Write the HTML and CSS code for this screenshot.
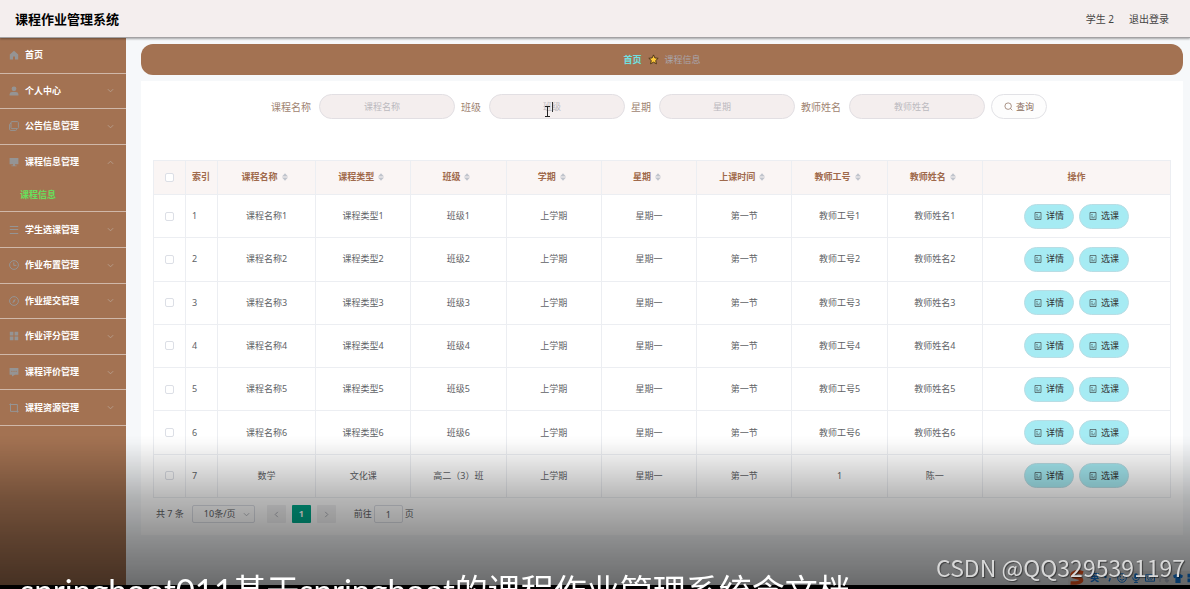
FILE: index.html
```html
<!DOCTYPE html>
<html lang="zh-CN">
<head>
<meta charset="utf-8">
<meta name="viewport" content="width=device-width, initial-scale=1">
<title>课程作业管理系统</title>
<link rel="stylesheet" href="styles.css">
</head>
<body>
<svg class="sprite" aria-hidden="true">
  <symbol id="down" viewBox="0 0 8 8"><path d="M1 2.5 4 5.5 7 2.5" fill="none" stroke="currentColor"/></symbol>
  <symbol id="up" viewBox="0 0 8 8"><path d="M1 5.5 4 2.5 7 5.5" fill="none" stroke="currentColor"/></symbol>
  <symbol id="left" viewBox="0 0 8 8"><path d="M5.5 1 2.5 4 5.5 7" fill="none" stroke="currentColor"/></symbol>
  <symbol id="right" viewBox="0 0 8 8"><path d="M2.5 1 5.5 4 2.5 7" fill="none" stroke="currentColor"/></symbol>
  <symbol id="sort" viewBox="0 0 6 8"><path d="M0 3.4 3 .2 6 3.4ZM0 4.6 3 7.8 6 4.6Z" fill="currentColor"/></symbol>
  <symbol id="doc" viewBox="0 0 8 8"><path d="M1 .5h6v7H1zM2.3 2.5h1.3M2.3 4.2h1.5M2.3 5.8h3.4M5.4 3.8v.8" fill="none" stroke="currentColor" stroke-width=".6"/></symbol>
</svg>

<header class="topbar">
  <h1 class="brand">课程作业管理系统</h1>
  <nav class="account"><span>学生 2</span><a href="#logout">退出登录</a></nav>
</header>

<div class="shell">
  <nav class="sidebar">
    <ul class="menu">
      <li class="entry"><a href="#home"><svg class="icon" viewBox="0 0 10 10"><path d="M5 .8.8 4.6V9.6H4V6.6h2v3h3.2v-5z" fill="currentColor"/></svg>首页</a></li>
      <li class="entry"><a href="#me"><svg class="icon" viewBox="0 0 10 10"><circle cx="5" cy="2.8" r="2.4" fill="currentColor"/><path d="M.6 9.6V8Q.8 6 3 6h4q2.2 0 2.4 2v1.6z" fill="currentColor"/></svg>个人中心<svg class="arrow"><use href="#down"/></svg></a></li>
      <li class="entry"><a href="#notice"><svg class="icon" viewBox="0 0 10 10"><path d="M3 .6h5.4q1 0 1 1v5q0 1-1 1H3q-1 0-1-1v-5q0-1 1-1zM2 2.4Q.6 2.4.6 3.8v4.4q0 1.2 1.2 1.2h4.8q1 0 1-1.2" fill="none" stroke="currentColor"/></svg>公告信息管理<svg class="arrow"><use href="#down"/></svg></a></li>
      <li class="entry"><a href="#course"><svg class="icon" viewBox="0 0 10 10"><path d="M.6 1h8.8v6.2H6v1.2h1.6v.8H2.4v-.8H4V7.2H.6z" fill="currentColor"/></svg>课程信息管理<svg class="arrow"><use href="#up"/></svg></a></li>
      <li class="sub"><a href="#course-info">课程信息</a></li>
      <li class="entry"><a href="#select"><svg class="icon" viewBox="0 0 10 10"><path d="M.8 1.5h8.4M.8 4.5h8.4M.8 8.5h8.4" stroke="currentColor" stroke-width="1.2"/></svg>学生选课管理<svg class="arrow"><use href="#down"/></svg></a></li>
      <li class="entry"><a href="#assign"><svg class="icon" viewBox="0 0 10 10"><circle cx="5" cy="5" r="4.4" fill="none" stroke="currentColor"/><path d="M4.8 2.4V5.4h2.6" fill="none" stroke="currentColor"/></svg>作业布置管理<svg class="arrow"><use href="#down"/></svg></a></li>
      <li class="entry"><a href="#submit"><svg class="icon" viewBox="0 0 10 10"><circle cx="5" cy="5" r="4.4" fill="none" stroke="currentColor"/><path d="M6.8 2.8 5.6 5.7 3.3 7.2 4.5 4.3z" fill="currentColor"/></svg>作业提交管理<svg class="arrow"><use href="#down"/></svg></a></li>
      <li class="entry"><a href="#score"><svg class="icon" viewBox="0 0 10 10"><path d="M.8.8h3.6v3.6H.8zM5.6.8h3.6v3.6H5.6zM.8 5.6h3.6v3.6H.8zM5.6 5.6h3.6v3.6H5.6z" fill="currentColor"/></svg>作业评分管理<svg class="arrow"><use href="#down"/></svg></a></li>
      <li class="entry"><a href="#review"><svg class="icon" viewBox="0 0 10 10"><path d="M.6 1h8.8v6.8H6L3 9.4V7.8H.6z" fill="currentColor"/><path d="M2.4 4.4h1M4.5 4.4h1M6.6 4.4h1" stroke="#a37252" stroke-width="1"/></svg>课程评价管理<svg class="arrow"><use href="#down"/></svg></a></li>
      <li class="entry"><a href="#resource"><svg class="icon" viewBox="0 0 10 10"><path d="M1.5.4v8h8.1M.4 1.5h8v8.1" fill="none" stroke="currentColor"/></svg>课程资源管理<svg class="arrow"><use href="#down"/></svg></a></li>
    </ul>
  </nav>

  <main class="content">
    <nav class="crumbs">
      <a class="crumb-home" href="#home">首页</a>
      <svg class="star" viewBox="0 0 12 12"><path d="m6 1 1.5 3.3 3.6.4-2.7 2.4.8 3.6L6 8.9l-3.2 1.8.8-3.6L.9 4.7l3.6-.4z" fill="#ffc83a" stroke="#3c2912" stroke-width=".9" stroke-linejoin="round"/></svg>
      <span class="crumb-here">课程信息</span>
    </nav>

    <section class="card">
      <form class="filters">
        <div class="field"><label for="f-course">课程名称</label><input id="f-course" type="text" placeholder="课程名称"></div>
        <div class="field"><label for="f-class">班级</label><span class="focus-box"><input id="f-class" type="text" placeholder="班级"><svg class="cursor" viewBox="0 0 12 18"><path d="M8.5 1v10" stroke="#333"/><path d="M1 5.5h5M3.5 5.5v10M1 15.5h5" fill="none" stroke="#222"/></svg></span></div>
        <div class="field"><label for="f-day">星期</label><input id="f-day" type="text" placeholder="星期"></div>
        <div class="field"><label for="f-teacher">教师姓名</label><input id="f-teacher" type="text" placeholder="教师姓名"></div>
        <button class="search" type="button"><svg class="glass" viewBox="0 0 10 10"><circle cx="4.6" cy="4.6" r="3.6" fill="none" stroke="currentColor" stroke-width=".8"/><path d="m7.2 7.2 2 2" stroke="currentColor" stroke-width=".8"/></svg>查询</button>
      </form>

      <table class="grid">
        <colgroup><col class="c-check"><col class="c-index"><col class="c-name"><col><col><col><col><col><col><col><col class="c-ops"></colgroup>
        <thead>
          <tr><th><input type="checkbox" aria-label="全选"></th><th class="index">索引</th><th>课程名称<svg class="sort"><use href="#sort"/></svg></th><th>课程类型<svg class="sort"><use href="#sort"/></svg></th><th>班级<svg class="sort"><use href="#sort"/></svg></th><th>学期<svg class="sort"><use href="#sort"/></svg></th><th>星期<svg class="sort"><use href="#sort"/></svg></th><th>上课时间<svg class="sort"><use href="#sort"/></svg></th><th>教师工号<svg class="sort"><use href="#sort"/></svg></th><th>教师姓名<svg class="sort"><use href="#sort"/></svg></th><th>操作</th></tr>
        </thead>
        <tbody>
          <tr><td><input type="checkbox" aria-label="选择 1"></td><td class="index">1</td><td>课程名称1</td><td>课程类型1</td><td>班级1</td><td>上学期</td><td>星期一</td><td>第一节</td><td>教师工号1</td><td>教师姓名1</td><td><div class="ops"><button type="button"><svg class="doc"><use href="#doc"/></svg>详情</button><button type="button"><svg class="doc"><use href="#doc"/></svg>选课</button></div></td></tr>
          <tr><td><input type="checkbox" aria-label="选择 2"></td><td class="index">2</td><td>课程名称2</td><td>课程类型2</td><td>班级2</td><td>上学期</td><td>星期一</td><td>第一节</td><td>教师工号2</td><td>教师姓名2</td><td><div class="ops"><button type="button"><svg class="doc"><use href="#doc"/></svg>详情</button><button type="button"><svg class="doc"><use href="#doc"/></svg>选课</button></div></td></tr>
          <tr><td><input type="checkbox" aria-label="选择 3"></td><td class="index">3</td><td>课程名称3</td><td>课程类型3</td><td>班级3</td><td>上学期</td><td>星期一</td><td>第一节</td><td>教师工号3</td><td>教师姓名3</td><td><div class="ops"><button type="button"><svg class="doc"><use href="#doc"/></svg>详情</button><button type="button"><svg class="doc"><use href="#doc"/></svg>选课</button></div></td></tr>
          <tr><td><input type="checkbox" aria-label="选择 4"></td><td class="index">4</td><td>课程名称4</td><td>课程类型4</td><td>班级4</td><td>上学期</td><td>星期一</td><td>第一节</td><td>教师工号4</td><td>教师姓名4</td><td><div class="ops"><button type="button"><svg class="doc"><use href="#doc"/></svg>详情</button><button type="button"><svg class="doc"><use href="#doc"/></svg>选课</button></div></td></tr>
          <tr><td><input type="checkbox" aria-label="选择 5"></td><td class="index">5</td><td>课程名称5</td><td>课程类型5</td><td>班级5</td><td>上学期</td><td>星期一</td><td>第一节</td><td>教师工号5</td><td>教师姓名5</td><td><div class="ops"><button type="button"><svg class="doc"><use href="#doc"/></svg>详情</button><button type="button"><svg class="doc"><use href="#doc"/></svg>选课</button></div></td></tr>
          <tr><td><input type="checkbox" aria-label="选择 6"></td><td class="index">6</td><td>课程名称6</td><td>课程类型6</td><td>班级6</td><td>上学期</td><td>星期一</td><td>第一节</td><td>教师工号6</td><td>教师姓名6</td><td><div class="ops"><button type="button"><svg class="doc"><use href="#doc"/></svg>详情</button><button type="button"><svg class="doc"><use href="#doc"/></svg>选课</button></div></td></tr>
          <tr><td><input type="checkbox" aria-label="选择 7"></td><td class="index">7</td><td>数学</td><td>文化课</td><td>高二（3）班</td><td>上学期</td><td>星期一</td><td>第一节</td><td>1</td><td>陈一</td><td><div class="ops"><button type="button"><svg class="doc"><use href="#doc"/></svg>详情</button><button type="button"><svg class="doc"><use href="#doc"/></svg>选课</button></div></td></tr>
        </tbody>
      </table>

      <div class="pager">
        <span>共 7 条</span>
        <span class="size"><select aria-label="每页条数"><option>10条/页</option></select><svg class="size-arrow"><use href="#down"/></svg></span>
        <div class="pages">
          <button type="button" aria-label="上一页"><svg class="step"><use href="#left"/></svg></button>
          <button type="button" class="current">1</button>
          <button type="button" aria-label="下一页"><svg class="step"><use href="#right"/></svg></button>
        </div>
        <div class="jump"><label for="jump">前往</label><input id="jump" type="text" value="1"><span>页</span></div>
      </div>
    </section>
  </main>
</div>

<div class="ime">
  <svg class="sogou" viewBox="0 0 18 16"><path d="M15 3Q8 .6 5 3.4T8.6 7.6t4.4 3.6T2.6 13" fill="none" stroke="#ff5a1e" stroke-width="3.6"/></svg>
  <span>英</span>
  <svg viewBox="0 0 10 10"><circle cx="2.5" cy="4" r="1.2" fill="currentColor"/><path d="M7 5v1.2L6 8.4" stroke="currentColor" stroke-width="1.4" fill="none"/></svg>
  <svg viewBox="0 0 10 10"><circle cx="5" cy="5" r="4.3" fill="none" stroke="currentColor"/><path d="M3.4 3v1.4M6.6 3v1.4M2.6 6q2.4 2.6 4.8 0" fill="none" stroke="currentColor"/></svg>
  <svg viewBox="0 0 10 10"><rect x="3.2" y=".2" width="3.6" height="5.8" rx="1.8" fill="currentColor"/><path d="M1.6 4.4q0 3.2 3.4 3.2t3.4-3.2M5 7.6V10M3 9.6h4" fill="none" stroke="currentColor"/></svg>
  <svg viewBox="0 0 10 10"><path d="M.5 1.8h9v6.4h-9z" fill="none" stroke="currentColor"/><path d="M2 3.8h6M2 5.2h6M3 6.7h4" stroke="currentColor" stroke-dasharray="1 .6"/></svg>
  <svg class="pale" viewBox="0 0 10 10"><circle cx="4" cy="2" r="1.8" fill="currentColor"/><path d="M1 9V6q3-3 6 0v3M8 4v4M6 7l2 2 2-2" fill="none" stroke="currentColor" stroke-width="1.4"/></svg>
  <svg viewBox="0 0 10 10"><path d="M3 1q2 1.6 4 0l3 1.6-1 2.6-1.4-.4V10H2.4V4.8L1 5.2 0 2.6z" fill="currentColor"/></svg>
  <svg viewBox="0 0 10 10"><path d="M.5.8h4v3.6h-4zM.5 5.6h4v3.6h-4zM5.6.8h4v3.6h-4zM5.6 5.6h4v3.6h-4z" fill="currentColor"/></svg>
</div>
<div class="shade"></div>
<div class="caption">springboot011基于springboot的课程作业管理系统含文档</div>
<div class="watermark">CSDN @QQ3295391197</div>
</body>
</html>
```
FILE: styles.css
```css
* { box-sizing: border-box; }

body {
  margin: 0;
  min-height: 100vh;
  display: flex;
  flex-direction: column;
  border-bottom: 4px solid #000;
  background: #f6f8fa;
  color: #606266;
  font: 9px/12px "Noto Sans", "Noto Sans CJK SC", sans-serif;
}

a { color: inherit; text-decoration: none; }
button, input, select { font: inherit; color: inherit; margin: 0; }
svg { flex: none; }
.sprite { position: absolute; width: 0; height: 0; }

.topbar {
  position: relative;
  display: flex;
  align-items: center;
  justify-content: space-between;
  height: 38px;
  padding: 0 21px 0 15px;
  background: #f4eeee;
  border-bottom: 1px solid #a3a1a3;
  box-shadow: 0 1px 2px rgba(0, 0, 0, .35);
}
.brand { margin: 0; font-size: 13px; line-height: 20px; color: #000; }
.account { display: flex; gap: 15px; font-size: 10px; color: #444; }

.shell { flex: 1; display: flex; }

.sidebar { width: 126px; flex: none; background: #a37252; }
.menu {
  display: flex;
  flex-direction: column;
  height: 388px;
  margin: 0;
  padding: 0;
  list-style: none;
  font-weight: 700;
  color: #fff;
}
.entry { flex: 1; border-bottom: 1px solid #d0b8a9; }
.entry a { display: flex; align-items: center; height: 100%; padding: 0 12px 0 9px; }
.entry:has(+ .sub) { border-bottom-color: transparent; }
.icon { width: 10px; height: 10px; margin-right: 6px; color: #959494; }
.arrow { width: 7px; height: 7px; margin-left: auto; color: #b8a090; }
.sub { height: 32px; border-bottom: 1px solid #d0b8a9; color: #67e05c; }
.sub a { display: block; padding: 9px 0 0 20px; }

.content { flex: 1; min-width: 0; padding: 6px 7px 0 15px; }

.crumbs {
  display: flex;
  align-items: center;
  justify-content: center;
  gap: 6px;
  height: 31px;
  border-radius: 12px;
  background: #a37252;
}
.crumb-home { color: #6fe0e0; font-weight: 700; }
.crumb-here { color: #a9a5ac; }
.star { width: 11px; height: 11px; }

.card { margin-top: 6px; padding: 13px 12px 11px; background: #fff; }

.filters {
  display: flex;
  justify-content: center;
  gap: 6px;
  padding-right: 6px;
  margin-bottom: 41px;
  font-size: 10px;
  color: #a08472;
}
.field { display: flex; align-items: center; gap: 8px; }
.filters input {
  display: block;
  width: 136px;
  height: 25px;
  padding: 0 20px 0 10px;
  border: 1px solid #e2dfe3;
  border-radius: 13px;
  background: #f4eeee;
  font-size: 9px;
  text-align: center;
}
.filters input::placeholder { color: #bbb9be; }
.focus-box { position: relative; }
.cursor { position: absolute; left: 55px; top: 7px; width: 12px; height: 18px; }
.search {
  display: flex;
  align-items: center;
  justify-content: center;
  gap: 3px;
  width: 56px;
  height: 25px;
  padding: 0;
  border: 1px solid #e2e2e6;
  border-radius: 13px;
  background: #fdfdfd;
  font-size: 9px;
  color: #8b6d5c;
}
.glass { width: 9px; height: 9px; }

.grid {
  width: 100%;
  height: 338px;
  table-layout: fixed;
  border-collapse: collapse;
  text-align: center;
}
.c-check, .c-index { width: 32px; }
.c-name { width: 98px; }
.c-ops { width: 188px; }
.grid th, .grid td { padding: 0; border: 1px solid #eceef2; }
.grid th { height: 34px; padding-bottom: 1px; background: #faf5f4; color: #a06a4c; font-weight: 700; }
.grid th:has(.sort) { padding-right: 4px; }
.grid .index { padding-left: 6px; text-align: left; }
.grid input {
  appearance: none;
  display: block;
  width: 9px;
  height: 9px;
  margin: 0 auto;
  border: 1px solid #dcdfe6;
  border-radius: 2px;
  background: transparent;
}
.grid th input { background: #fff; }
.sort { width: 6px; height: 8px; margin-left: 4px; vertical-align: -1px; color: #c0c4cc; }
.ops { display: flex; justify-content: center; gap: 5px; }
.ops button {
  display: flex;
  align-items: center;
  justify-content: center;
  gap: 4px;
  width: 50px;
  height: 25px;
  padding: 0;
  border: 1px solid #b8dde4;
  border-radius: 13px;
  background: #a6ebf3;
  color: #333;
}
.doc { width: 8px; height: 8px; }

.pager { display: flex; align-items: center; height: 20px; margin-top: 6px; padding-left: 3px; }
.size { position: relative; margin-left: 8px; }
.size select {
  appearance: none;
  display: block;
  width: 63px;
  height: 18px;
  padding: 0 0 0 11px;
  border: 1px solid #dcdfe6;
  border-radius: 2px;
  background: transparent;
}
.size-arrow { position: absolute; right: 5px; top: 6px; width: 7px; height: 7px; color: #b0b3ba; }
.pages { display: flex; gap: 6px; margin-left: 12px; }
.pages button {
  display: grid;
  place-items: center;
  width: 19px;
  height: 18px;
  padding: 0;
  border: 0;
  border-radius: 1px;
  background: #f1f1f2;
  color: #a5a8b0;
}
.pages .current { background: #00a98b; color: #fff; font-weight: 700; }
.step { width: 7px; height: 7px; }
.jump { display: flex; align-items: center; gap: 2px; margin-left: 18px; }
.jump input {
  width: 29px;
  height: 18px;
  padding: 0;
  border: 1px solid #dcdfe6;
  border-radius: 2px;
  background: transparent;
  text-align: center;
}

.ime {
  position: fixed;
  right: -7px;
  bottom: 4px;
  display: flex;
  align-items: center;
  gap: 4px;
  height: 14px;
  background: #eee;
  color: #1482ea;
  font-weight: 700;
}
.ime svg { width: 10px; height: 10px; }
.ime .sogou { width: 18px; height: 16px; }
.ime .pale { color: #c3cad8; }

.shade {
  position: fixed;
  left: 0;
  right: 0;
  bottom: 4px;
  height: 150px;
  pointer-events: none;
  background: linear-gradient(transparent 0, rgba(0, 0, 0, .02) 5%, rgba(0, 0, 0, .11) 18%, rgba(0, 0, 0, .28) 41%, rgba(0, 0, 0, .42) 67%, rgba(0, 0, 0, .57) 100%);
}
.caption {
  position: fixed;
  left: 20px;
  bottom: 0;
  height: 20px;
  color: #fff;
  font: 33px/42px Lato, "Noto Sans CJK SC", sans-serif;
  white-space: nowrap;
}
.watermark {
  position: fixed;
  right: 5px;
  bottom: 7px;
  color: #d8d8d8;
  font: 23px/30px "Noto Sans CJK SC", sans-serif;
  text-shadow: 1px 1px 1px rgba(0, 0, 0, .5);
  white-space: nowrap;
}
```
